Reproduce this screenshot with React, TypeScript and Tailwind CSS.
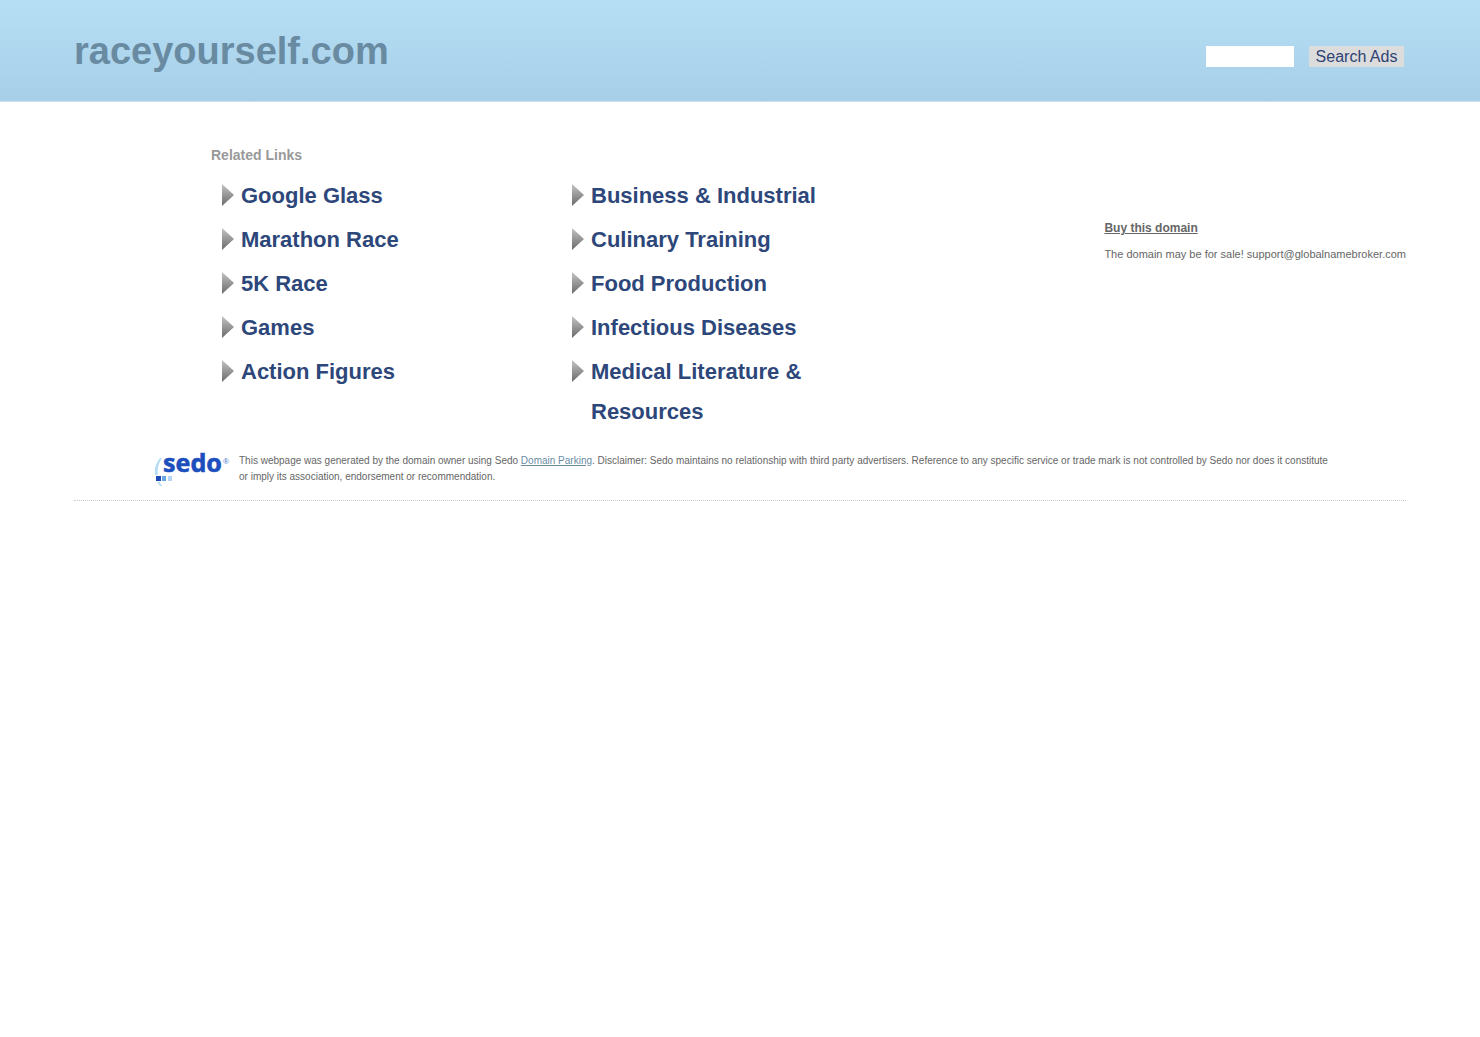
const left = ["Google Glass", "Marathon Race", "5K Race", "Games", "Action Figures"];
const right = ["Business & Industrial", "Culinary Training", "Food Production", "Infectious Diseases", "Medical Literature & Resources"];

function Arrow() {
  return (
    <svg viewBox="0 0 12 24" className="mt-[7px] h-6 w-3 shrink-0" aria-hidden="true">
      <defs>
        <linearGradient id="arrow" x1="0" y1="0" x2="0" y2="1">
          <stop offset="0" stopColor="#c4c4c4" />
          <stop offset="1" stopColor="#6a6a6a" />
        </linearGradient>
      </defs>
      <path d="M0 1 L12 12 L0 23 Z" fill="url(#arrow)" />
    </svg>
  );
}

function Links({ items }: { items: string[] }) {
  return (
    <ul className="flex w-[350px] flex-col gap-1 pl-[11px]">
      {items.map((t) => (
        <li key={t} className="flex gap-[7px]">
          <Arrow />
          <a href="#" className="w-[260px] text-[22px] leading-10 font-bold text-[#2d477a]">{t}</a>
        </li>
      ))}
    </ul>
  );
}

function SedoLogo() {
  return (
    <svg viewBox="0 0 77 36" className="h-9 w-[77px] shrink-0 overflow-visible" role="img" aria-label="Sedo">
      <path d="M6 6 L8 6 C2 14 2 26 8 34 L6 34 C-1 26 -1 14 6 6 Z" fill="#b4dcf6" />
      <text x="9" y="20" fontFamily="Noto Sans, sans-serif" fontWeight="700" fontSize="25" fill="#1c4fbd" stroke="#1c4fbd" strokeWidth="0.6">sedo</text>
      <text x="69" y="12" fontFamily="Liberation Sans, sans-serif" fontSize="8" fill="#3f70cc">®</text>
      <rect x="1" y="23" width="19" height="7" fill="#fff" />
      <rect x="2" y="24" width="5" height="5" fill="#1c49b4" />
      <rect x="8" y="24" width="4" height="5" fill="#6aa5e3" />
      <rect x="14" y="24" width="4" height="5" fill="#b5d5f5" />
    </svg>
  );
}

export default function App() {
  return (
    <div className="min-h-screen bg-white font-['Liberation_Sans',sans-serif] text-[#666]">
      <header className="flex items-center justify-between border-b border-[#c8e0f0] bg-linear-to-b from-[#b6dff5] to-[#a7cfe8] px-[5%] pt-[29px] pb-7">
        <h1 className="text-[38px] leading-[44px] font-bold text-[#698ba2]">raceyourself.com</h1>
        <form className="mt-[10px] mr-[2px] flex items-center gap-[15px]" onSubmit={(e) => e.preventDefault()}>
          <input aria-label="Search" className="h-[21px] w-[88px] bg-white px-1" />
          <button className="h-[21px] w-[95px] bg-[#dcdcdc] text-base leading-[21px] text-[#2d4374]">Search Ads</button>
        </form>
      </header>
      <main className="mx-[5%] flex justify-between pt-11">
        <section className="pl-[137px]">
          <h2 className="text-sm leading-[18px] font-bold text-[#999]">Related Links</h2>
          <div className="mt-3 flex">
            <Links items={left} />
            <Links items={right} />
          </div>
        </section>
        <aside className="pt-[74px] text-[11px] leading-4">
          <a href="#" className="text-xs leading-4 font-bold underline">Buy this domain</a>
          <p className="mt-[10px]">The domain may be for sale! support@globalnamebroker.com</p>
        </aside>
      </main>
      <footer className="mx-[5%] mt-5 flex gap-2 border-b border-dotted border-[#ccc] pb-3 pl-[80px]">
        <SedoLogo />
        <p className="mt-px pr-[72px] text-[10px] leading-4">
          This webpage was generated by the domain owner using Sedo <a href="#" className="text-[#6a8da4] underline">Domain Parking</a>. Disclaimer: Sedo maintains no relationship with third party advertisers. Reference to any specific service or trade mark is not controlled by Sedo nor does it constitute or imply its association, endorsement or recommendation.
        </p>
      </footer>
    </div>
  );
}
